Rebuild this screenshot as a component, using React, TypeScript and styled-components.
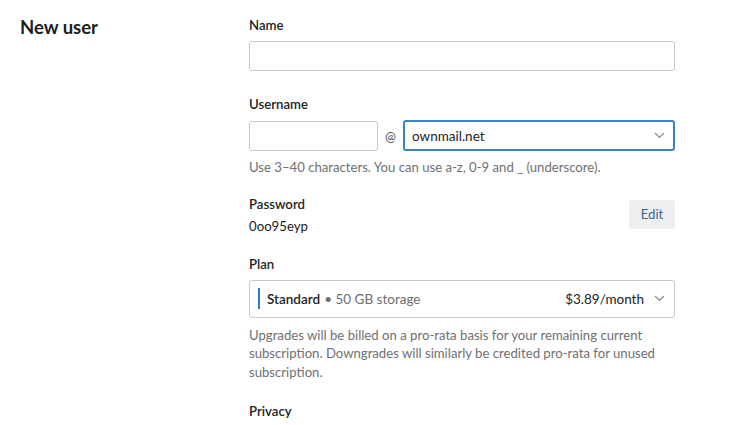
import React from "react";
import styled, { createGlobalStyle } from "styled-components";

const Global = createGlobalStyle`
  html, body { margin: 0; padding: 0; background: #ffffff; }
  body { font-family: Lato, "Liberation Sans", sans-serif; color: #222; -webkit-font-smoothing: antialiased; }
  * { box-sizing: border-box; }
`;

const Page = styled.div`
  display: flex;
  padding: 16px 0 0 20px;
  width: 736px;
`;

const Side = styled.div`
  width: 229px;
  flex: none;
`;

const Title = styled.h1`
  margin: 0;
  font-size: 18.5px;
  line-height: 22px;
  font-weight: 700;
  color: #1d1d1d;
`;

const Main = styled.div`
  width: 426px;
  display: flex;
  flex-direction: column;
`;

const Field = styled.div<{ $gap?: number }>`
  display: flex;
  flex-direction: column;
  margin-bottom: ${(p) => p.$gap ?? 24}px;
`;

const Label = styled.div`
  font-size: 13.2px;
  line-height: 18px;
  font-weight: 600;
  color: #222;
`;

const Control = styled.div`
  margin-top: 7px;
`;

const TextInput = styled.input`
  display: block;
  width: 100%;
  height: 30px;
  border: 1px solid #c9c9c9;
  border-radius: 3px;
  font: inherit;
  font-size: 13px;
  padding: 0 8px;
  outline: none;
  background: #fff;
`;

const Row = styled.div`
  display: flex;
  align-items: center;
`;

const ShortInput = styled(TextInput)`
  width: 129px;
`;

const At = styled.span`
  font-size: 13px;
  color: #555;
  width: 25px;
  text-align: center;
`;

const Select = styled.div<{ $focus?: boolean; $tall?: boolean }>`
  flex: 1;
  display: flex;
  align-items: center;
  height: ${(p) => (p.$tall ? 38 : 31)}px;
  border: ${(p) => (p.$focus ? "2px solid #3b82c9" : "1px solid #c9c9c9")};
  border-radius: 3px;
  padding: 0 ${(p) => (p.$focus ? 8 : 9)}px 0 ${(p) => (p.$focus ? 7 : 8)}px;
  font-size: 13.5px;
  color: #1d1d1d;
  background: #fff;
`;

const SelectText = styled.span`
  flex: 1;
  display: flex;
  align-items: center;
`;

const Bar = styled.span`
  display: inline-block;
  width: 2px;
  height: 21px;
  background: #2f7ad0;
  margin-right: 7px;
`;

const Strong = styled.span`
  font-weight: 600;
  color: #222;
`;

const Muted = styled.span`
  color: #6d6d6d;
  margin-left: 4px;
`;

const Price = styled.span`
  color: #222;
  margin-right: 10px;
`;

const Help = styled.p<{ $top?: number }>`
  margin: ${(p) => p.$top ?? 7}px 0 0;
  font-size: 13.15px;
  line-height: 18.5px;
  color: #707070;
`;

const PassRow = styled.div`
  display: flex;
  justify-content: space-between;
  align-items: flex-start;
`;

const Value = styled.div`
  margin-top: 4px;
  font-size: 13.2px;
  line-height: 18px;
  color: #222;
`;

const EditButton = styled.button`
  margin-top: 5px;
  height: 29px;
  width: 46px;
  border: none;
  border-radius: 3px;
  background: #eceef0;
  color: #3f6a91;
  font: inherit;
  font-size: 13.2px;
  cursor: pointer;
`;

const Chevron = () => (
  <svg width="11" height="7" viewBox="0 0 11 7" fill="none">
    <path d="M1 1l4.5 4.5L10 1" stroke="#8a8a8a" strokeWidth="1.2" />
  </svg>
);

export default function App() {
  return (
    <>
      <Global />
      <Page>
        <Side>
          <Title>New user</Title>
        </Side>
        <Main>
          <Field>
            <Label>Name</Label>
            <Control>
              <TextInput />
            </Control>
          </Field>
          <Field $gap={18}>
            <Label>Username</Label>
            <Control>
              <Row>
                <ShortInput />
                <At>@</At>
                <Select $focus>
                  <SelectText>ownmail.net</SelectText>
                  <Chevron />
                </Select>
              </Row>
            </Control>
            <Help>Use 3–40 characters. You can use a-z, 0-9 and _ (underscore).</Help>
          </Field>
          <Field $gap={20}>
            <PassRow>
              <div>
                <Label>Password</Label>
                <Value>0oo95eyp</Value>
              </div>
              <EditButton>Edit</EditButton>
            </PassRow>
          </Field>
          <Field $gap={21}>
            <Label>Plan</Label>
            <Control>
              <Select $tall>
                <SelectText>
                  <Bar />
                  <Strong>Standard</Strong>
                  <Muted>• 50 GB storage</Muted>
                </SelectText>
                <Price>$3.89/month</Price>
                <Chevron />
              </Select>
            </Control>
            <Help $top={8}>
              Upgrades will be billed on a pro-rata basis for your remaining current
              subscription. Downgrades will similarly be credited pro-rata for unused
              subscription.
            </Help>
          </Field>
          <Field>
            <Label>Privacy</Label>
          </Field>
        </Main>
      </Page>
    </>
  );
}
